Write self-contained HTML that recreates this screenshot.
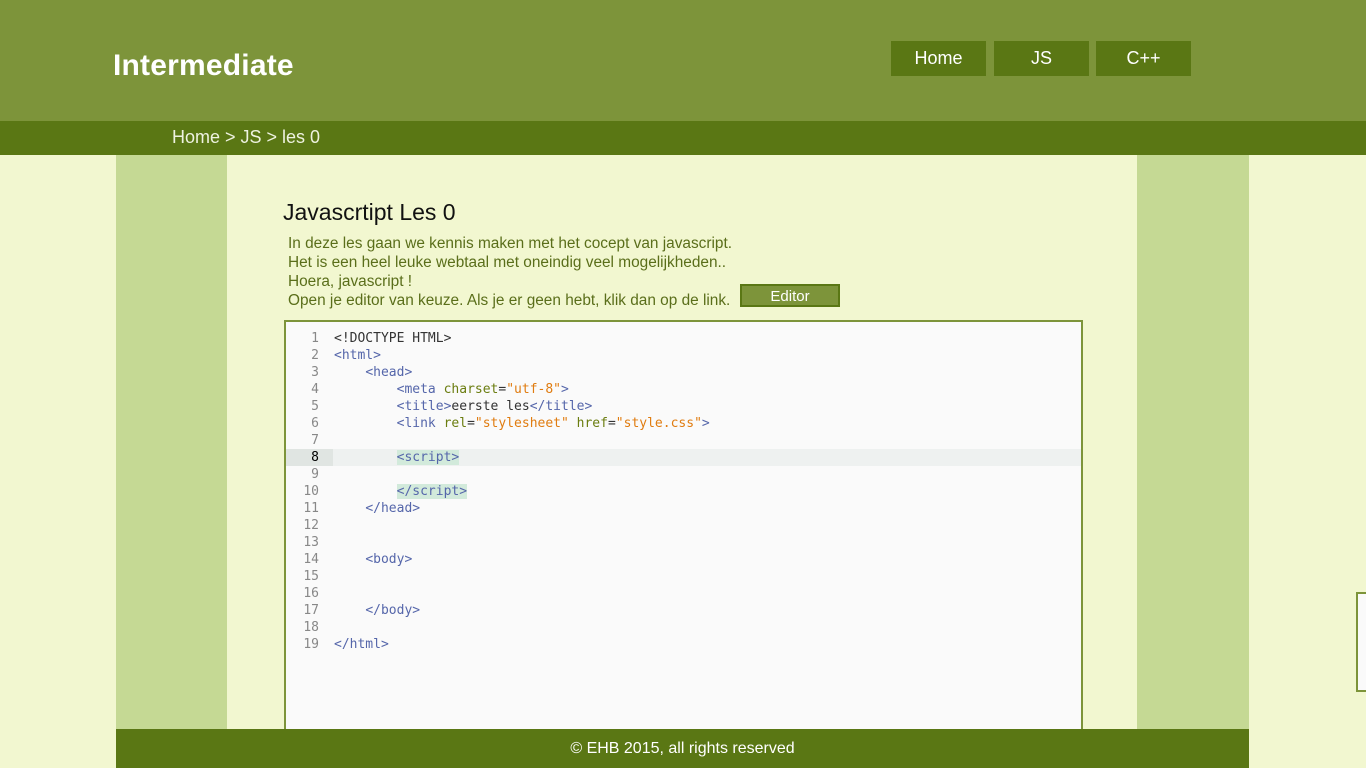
<!DOCTYPE html>
<html><head><meta charset="utf-8"><style>
*{margin:0;padding:0;box-sizing:border-box}
body{width:1366px;height:768px;overflow:hidden;background:#f2f7d0;font-family:"Liberation Sans",sans-serif;position:relative}
.hdr{position:absolute;left:0;top:0;width:1366px;height:121px;background:#7d943a}
.logo{position:absolute;left:113px;top:49px;color:#fff;font-size:30px;font-weight:bold;letter-spacing:0.2px}
.nav{position:absolute;top:41px;width:95px;height:35px;background:#5a7714;color:#fff;font-size:18px;text-align:center;line-height:35px}
.crumb{position:absolute;left:0;top:121px;width:1366px;height:34px;background:#5a7714;color:#eef2e0;font-size:18px;line-height:33px;padding-left:172px}
.side{position:absolute;top:155px;width:111px;height:574px;background:#c5d994}
h1{position:absolute;left:283px;top:199px;font-size:23px;font-weight:normal;color:#111}
.txt{position:absolute;left:288px;top:234px;font-size:15.4px;line-height:19px;color:#5a6e1a}
.btn{position:absolute;left:740px;top:284px;width:100px;height:23px;background:#7d943a;border:2px solid #5a7714;color:#fff;font-size:15px;text-align:center;line-height:21px}
.ed{position:absolute;left:284px;top:320px;width:799px;height:420px;border:2px solid #7d943a;background:#fafafa}
.code{position:absolute;left:0;top:8px;width:795px;font-family:"DejaVu Sans Mono",monospace;font-size:13px}
.l{height:17px;line-height:17px;position:relative;white-space:pre}
.n{position:absolute;left:0;width:33px;text-align:right;color:#888}
.c{position:absolute;left:48px;color:#333}
.hl{background:#eef1f0}
.hl .n{background:#e0e5e2;width:47px;padding-right:14px;color:#000}
.t{color:#5566aa}.a{color:#6b7d10}.s{color:#e07c10}
.m{background:#d2eadb}
.foot{position:absolute;left:116px;top:729px;width:1133px;height:39px;background:#5a7714;color:#fff;font-size:16px;text-align:center;line-height:39px}
.box{position:absolute;left:1356px;top:592px;width:20px;height:100px;border:2px solid #7d943a;background:#fafafa}
</style></head><body>
<div class="hdr"></div>
<div class="logo">Intermediate</div>
<div class="nav" style="left:891px">Home</div>
<div class="nav" style="left:994px">JS</div>
<div class="nav" style="left:1096px">C++</div>
<div class="crumb">Home &gt; JS &gt; les 0</div>
<div class="side" style="left:116px"></div>
<div class="side" style="left:1137px;width:112px"></div>
<h1>Javascrtipt Les 0</h1>
<div class="txt">In deze les gaan we kennis maken met het cocept van javascript.<br>Het is een heel leuke webtaal met oneindig veel mogelijkheden..<br>Hoera, javascript !<br>Open je editor van keuze. Als je er geen hebt, klik dan op de link.</div>
<div class="btn">Editor</div>
<div class="ed"><div class="code">
<div class="l"><span class="n">1</span><span class="c">&lt;!DOCTYPE HTML&gt;</span></div>
<div class="l"><span class="n">2</span><span class="c t">&lt;html&gt;</span></div>
<div class="l"><span class="n">3</span><span class="c">    <span class="t">&lt;head&gt;</span></span></div>
<div class="l"><span class="n">4</span><span class="c">        <span class="t">&lt;meta</span> <span class="a">charset</span>=<span class="s">"utf-8"</span><span class="t">&gt;</span></span></div>
<div class="l"><span class="n">5</span><span class="c">        <span class="t">&lt;title&gt;</span>eerste les<span class="t">&lt;/title&gt;</span></span></div>
<div class="l"><span class="n">6</span><span class="c">        <span class="t">&lt;link</span> <span class="a">rel</span>=<span class="s">"stylesheet"</span> <span class="a">href</span>=<span class="s">"style.css"</span><span class="t">&gt;</span></span></div>
<div class="l"><span class="n">7</span></div>
<div class="l hl"><span class="n">8</span><span class="c">        <span class="t m">&lt;script&gt;</span></span></div>
<div class="l"><span class="n">9</span></div>
<div class="l"><span class="n">10</span><span class="c">        <span class="t m">&lt;/script&gt;</span></span></div>
<div class="l"><span class="n">11</span><span class="c">    <span class="t">&lt;/head&gt;</span></span></div>
<div class="l"><span class="n">12</span></div>
<div class="l"><span class="n">13</span></div>
<div class="l"><span class="n">14</span><span class="c">    <span class="t">&lt;body&gt;</span></span></div>
<div class="l"><span class="n">15</span></div>
<div class="l"><span class="n">16</span></div>
<div class="l"><span class="n">17</span><span class="c">    <span class="t">&lt;/body&gt;</span></span></div>
<div class="l"><span class="n">18</span></div>
<div class="l"><span class="n">19</span><span class="c t">&lt;/html&gt;</span></div>
</div></div>
<div class="foot">© EHB 2015, all rights reserved</div>
<div class="box"></div>
</body></html>
